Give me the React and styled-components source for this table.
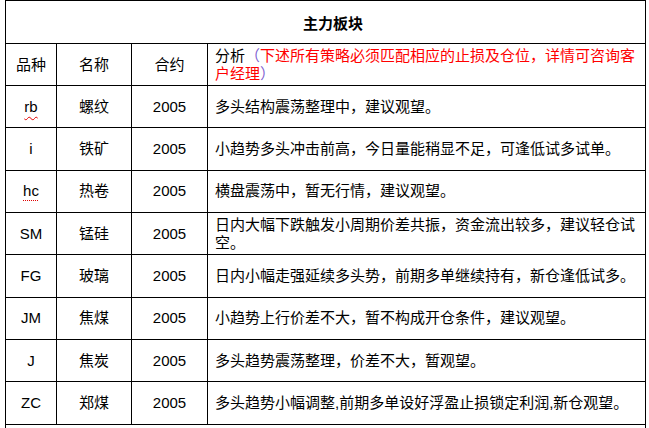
import React from "react";
import styled, { createGlobalStyle } from "styled-components";

const GlobalStyle = createGlobalStyle`
  html, body {
    margin: 0;
    padding: 0;
    background: #fff;
  }
  body {
    font-family: "Liberation Sans", "Noto Sans CJK SC", sans-serif;
    color: #000;
  }
`;

const rows = [
  { code: "rb", mark: "wavy", name: "螺纹", contract: "2005", text: "多头结构震荡整理中，建议观望。" },
  { code: "i", name: "铁矿", contract: "2005", text: "小趋势多头冲击前高，今日量能稍显不足，可逢低试多试单。" },
  { code: "hc", mark: "dotted", name: "热卷", contract: "2005", text: "横盘震荡中，暂无行情，建议观望。" },
  { code: "SM", name: "锰硅", contract: "2005", text: "日内大幅下跌触发小周期价差共振，资金流出较多，建议轻仓试空。" },
  { code: "FG", name: "玻璃", contract: "2005", text: "日内小幅走强延续多头势，前期多单继续持有，新仓逢低试多。" },
  { code: "JM", name: "焦煤", contract: "2005", text: "小趋势上行价差不大，暂不构成开仓条件，建议观望。" },
  { code: "J", name: "焦炭", contract: "2005", text: "多头趋势震荡整理，价差不大，暂观望。" },
  { code: "ZC", name: "郑煤", contract: "2005", text: "多头趋势小幅调整,前期多单设好浮盈止损锁定利润,新仓观望。" },
];

function App() {
  return (
    <Page>
      <GlobalStyle />
      <Table>
        <colgroup>
          <col style={{ width: 51 }} />
          <col style={{ width: 75 }} />
          <col style={{ width: 76 }} />
          <col style={{ width: 438 }} />
        </colgroup>
        <tbody>
          <tr>
            <TitleCell colSpan={4}>主力板块</TitleCell>
          </tr>
          <HeadRow>
            <Cell>品种</Cell>
            <Cell>名称</Cell>
            <Cell>合约</Cell>
            <TextCell>
              分析<Paren>（</Paren>
              <Note>下述所有策略必须匹配相应的止损及仓位，详情可咨询客户经理</Note>
              <Paren>）</Paren>
            </TextCell>
          </HeadRow>
          {rows.map((r) => (
            <Row key={r.code}>
              <Cell>
                <Code $mark={r.mark}>{r.code}</Code>
              </Cell>
              <Cell>{r.name}</Cell>
              <Cell>{r.contract}</Cell>
              <TextCell>{r.text}</TextCell>
            </Row>
          ))}
          <tr>
            <EmptyCell colSpan={4} />
          </tr>
        </tbody>
      </Table>
    </Page>
  );
}

export default App;

const Page = styled.div`
  padding-left: 5px;
  width: 649px;
  height: 428px;
  overflow: hidden;
  box-sizing: border-box;
`;

const Table = styled.table`
  border-collapse: collapse;
  table-layout: fixed;
  width: 640px;
  font-size: 15px;
`;

const TitleCell = styled.td`
  height: 42px;
  border: 1px solid #000;
  text-align: center;
  font-weight: bold;
  padding: 0 0 0 15px;
  vertical-align: middle;
`;

const HeadRow = styled.tr`
  height: 42px;
`;

const Row = styled.tr`
  height: 42.33px;
`;

const Cell = styled.td`
  border: 1px solid #000;
  text-align: center;
  vertical-align: middle;
  padding: 0;
  line-height: 18px;
`;

const TextCell = styled.td`
  border: 1px solid #000;
  text-align: left;
  vertical-align: middle;
  padding: 0 4px 0 7px;
  line-height: 18px;
`;

const EmptyCell = styled.td`
  height: 40px;
  border: 1px solid #000;
  padding: 0;
`;

const Paren = styled.span`
  color: #7f5fd0;
`;

const Note = styled.span`
  color: #ff0000;
`;

const Code = styled.span`
  text-decoration: ${(p) => (p.$mark ? `underline ${p.$mark} #e00000` : "none")};
  text-decoration-thickness: 1px;
  text-underline-offset: 4px;
`;
